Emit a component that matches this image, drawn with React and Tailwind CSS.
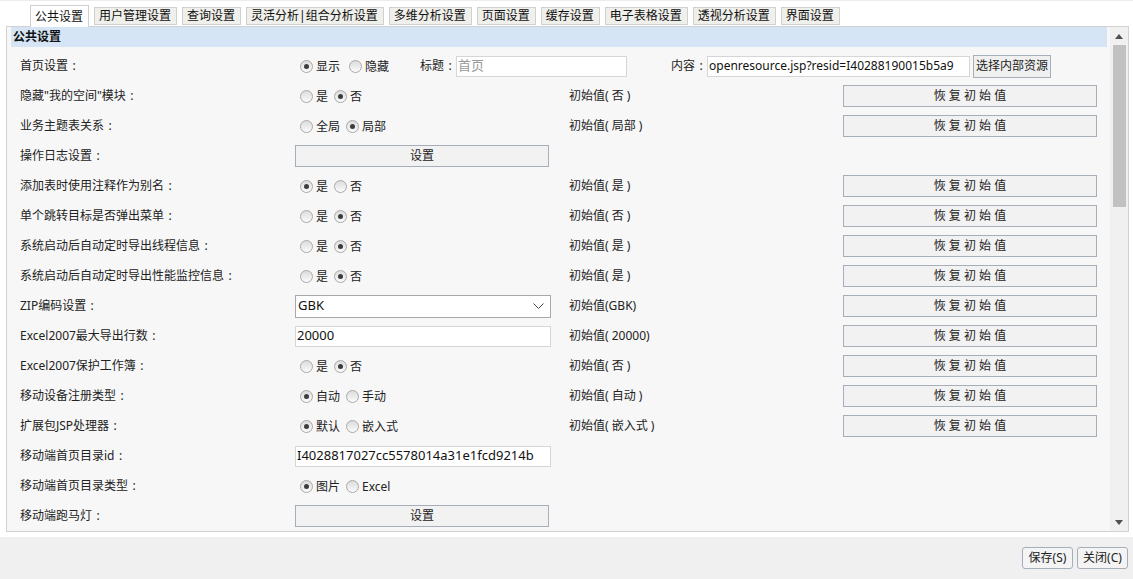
import React from "react";

const Label = ({ text, className = "" }) => {
  const has = text.endsWith("：");
  const t = has ? text.slice(0, -1) : text;
  return (
    <span className={`inline-flex items-center text-[12px] leading-[16px] whitespace-nowrap ${className}`}>
      <span>{t}</span>
      {has && <span className="inline-block w-[12px] text-center">:</span>}
    </span>
  );
};

const Radio = ({ checked }) => (
  <span className="inline-flex items-center justify-center w-[13px] h-[13px] rounded-full border border-[#a9a9a9] bg-linear-to-b from-[#dcdcdc] to-[#fbfbfb] ml-[5px] mr-[3px] shrink-0">
    {checked && <span className="block w-[5px] h-[5px] rounded-full bg-[#3c3c3c]" />}
  </span>
);

const RadioGroup = ({ options, checked, gap }) => (
  <div className="flex items-center">
    {options.map((o, i) => (
      <React.Fragment key={o}>
        <span className={i > 0 ? gap || "ml-[1px]" : ""} />
        <Radio checked={checked === i} />
        <span className="text-[12px] text-[#222] leading-none pt-[1px]">{o}</span>
      </React.Fragment>
    ))}
  </div>
);

const Btn = ({ children, w = "w-[254px]" }) => (
  <div
    className={`${w} h-[22px] border border-[#a5aeb9] bg-[#f2f2f2] flex items-center justify-center text-[12px] text-[#222] whitespace-pre`}
  >
    {children}
  </div>
);

const Restore = () => <Btn>{"恢 复 初 始 值"}</Btn>;

const Input = ({ value, w = "w-[256px]", placeholder, size = "text-[13px]" }) => (
  <div
    className={`${w} h-[21px] border border-[#d6d6d6] bg-white flex items-center pl-[1px] ${size} overflow-hidden whitespace-nowrap ${placeholder ? "text-[#9a9a9a]" : "text-[#111]"}`}
  >
    {value}
  </div>
);

const rows = [
  { label: '隐藏"我的空间"模块：', radio: ["是", "否"], c: 1, init: "初始值( 否 )", restore: true },
  { label: "业务主题表关系：", radio: ["全局", "局部"], c: 1, init: "初始值( 局部 )", restore: true },
  { label: "操作日志设置：", btn: "设置" },
  { label: "添加表时使用注释作为别名：", radio: ["是", "否"], c: 0, init: "初始值( 是 )", restore: true },
  { label: "单个跳转目标是否弹出菜单：", radio: ["是", "否"], c: 1, init: "初始值( 否 )", restore: true },
  { label: "系统启动后自动定时导出线程信息：", radio: ["是", "否"], c: 1, init: "初始值( 是 )", restore: true },
  { label: "系统启动后自动定时导出性能监控信息：", radio: ["是", "否"], c: 1, init: "初始值( 是 )", restore: true },
  { label: "ZIP编码设置：", select: "GBK", init: "初始值(GBK)", restore: true },
  { label: "Excel2007最大导出行数：", input: "20000", init: "初始值( 20000)", restore: true },
  { label: "Excel2007保护工作簿：", radio: ["是", "否"], c: 1, init: "初始值( 否 )", restore: true },
  { label: "移动设备注册类型：", radio: ["自动", "手动"], c: 0, init: "初始值( 自动 )", restore: true },
  { label: "扩展包JSP处理器：", radio: ["默认", "嵌入式"], c: 0, init: "初始值( 嵌入式 )", restore: true },
  { label: "移动端首页目录id：", input: "I4028817027cc5578014a31e1fcd9214b" },
  { label: "移动端首页目录类型：", radio: ["图片", "Excel"], c: 0 },
  { label: "移动端跑马灯：", btn: "设置" },
];

const tabs = [
  "公共设置",
  "用户管理设置",
  "查询设置",
  "灵活分析|组合分析设置",
  "多维分析设置",
  "页面设置",
  "缓存设置",
  "电子表格设置",
  "透视分析设置",
  "界面设置",
];

export default function App() {
  return (
    <div className="w-[1133px] h-[579px] bg-white overflow-hidden flex flex-col font-['Noto_Sans','Noto_Sans_CJK_SC',sans-serif] text-[#222]">
      {/* tabs */}
      <div className="h-[26px] shrink-0 flex items-end pl-[30px] gap-[5px] border-t border-[#ececec]">
        {tabs.map((t, i) =>
          i === 0 ? (
            <div
              key={t}
              className="h-[22px] -mb-px relative z-10 pl-[4px] pr-[5px] bg-white border border-b-0 border-[#cfcfcf] flex items-center text-[12px] text-[#111]"
            >
              {t}
            </div>
          ) : (
            <div
              key={t}
              className="h-[18px] mb-[1px] pl-[4px] pr-[5px] bg-[#efefeb] border border-[#d0d0cc] flex items-center text-[12px] text-[#111] whitespace-nowrap"
            >
              {t}
            </div>
          )
        )}
      </div>

      {/* panel */}
      <div className="ml-[6px] w-[1123px] h-[506px] shrink-0 border border-[#d2d2d2] bg-[#f7f7f7] flex">
        <div className="flex-1 pl-[4px] pr-[3px] overflow-hidden">
          <div className="h-[20px] bg-[#d5e5f5] flex items-center pl-[2px] text-[12px] font-bold text-[#111]">
            公共设置
          </div>
          <div className="pt-[4px] pl-[9px]">
            {/* row 1 */}
            <div className="h-[30px] flex items-center">
              <div className="w-[275px] flex items-center">
                <Label text="首页设置：" />
              </div>
              <div className="w-[125px] flex items-center">
                <RadioGroup options={["显示", "隐藏"]} checked={0} gap="ml-[4px]" />
              </div>
              <Label text="标题：" className="w-[36px]" />
              <Input value="首页" placeholder w="w-[171px]" />
              <Label text="内容：" className="ml-[44px] w-[36px]" />
              <Input value="openresource.jsp?resid=I40288190015b5a9" w="w-[263px]" size="text-[12px]" />
              <div className="ml-[3px] w-[78px] h-[23px] border border-[#a5aeb9] bg-[#f0f0f0] flex items-center justify-center text-[12px]">
                选择内部资源
              </div>
            </div>
            {rows.map((r) => (
              <div key={r.label} className="h-[30px] grid grid-cols-[275px_274px_274px_254px] items-center">
                <div className="flex items-center">
                  <Label text={r.label} />
                </div>
                <div className="flex items-center">
                  {r.radio && <RadioGroup options={r.radio} checked={r.c} />}
                  {r.btn && <Btn>{r.btn}</Btn>}
                  {r.input && <Input value={r.input} />}
                  {r.select && (
                    <div className="w-[256px] h-[23px] border border-[#a9a9a9] bg-white flex items-center justify-between pl-[2px] pr-[6px] text-[13px] text-[#111]">
                      <span>{r.select}</span>
                      <svg width="11" height="7" viewBox="0 0 11 7">
                        <polyline points="0.5,0.5 5.5,5.5 10.5,0.5" fill="none" stroke="#444" strokeWidth="1" />
                      </svg>
                    </div>
                  )}
                </div>
                <div className="text-[12px] whitespace-pre">{r.init || ""}</div>
                <div>{r.restore && <Restore />}</div>
              </div>
            ))}
          </div>
        </div>
        {/* scrollbar */}
        <div className="w-[18px] shrink-0 bg-[#f0f0f0] flex flex-col items-center">
          <div className="h-[18px] w-full flex items-center justify-center">
            <svg width="8" height="5" viewBox="0 0 8 5">
              <polygon points="0,5 8,5 4,0" fill="#505050" />
            </svg>
          </div>
          <div className="w-[13px] h-[162px] bg-[#c1c1c1] ml-[1px]" />
          <div className="flex-1" />
          <div className="h-[18px] w-full flex items-center justify-center">
            <svg width="8" height="5" viewBox="0 0 8 5">
              <polygon points="0,0 8,0 4,5" fill="#505050" />
            </svg>
          </div>
        </div>
      </div>

      <div className="h-[5px] shrink-0 bg-white" />
      <div className="flex-1 bg-[#f0f0f0] flex items-start justify-end pt-[10px] pr-[5px] gap-[4px]">
        <div className="w-[51px] h-[22px] border border-[#a5aeb9] rounded-[3px] bg-[#f4f4f4] flex items-center justify-center text-[12px]">
          保存(S)
        </div>
        <div className="w-[51px] h-[22px] border border-[#a5aeb9] rounded-[3px] bg-[#f4f4f4] flex items-center justify-center text-[12px]">
          关闭(C)
        </div>
      </div>
    </div>
  );
}
